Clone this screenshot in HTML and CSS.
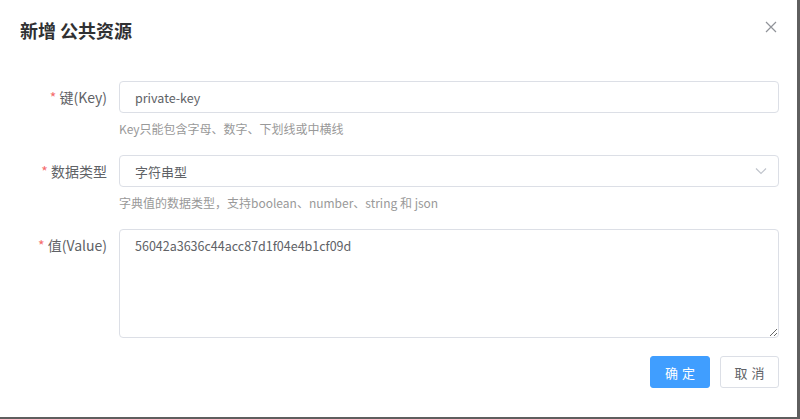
FILE: index.html
```html
<!DOCTYPE html>
<html lang="zh-CN">
<head>
    <meta charset="UTF-8">
    <title>新增 公共资源</title>
    <link rel="stylesheet" href="styles.css">
</head>
<body>
<div class="dialog">
    <div class="dialog-header">
        <span class="dialog-title">新增 公共资源</span>
        <span class="close">
            <svg width="12" height="12" viewBox="0 0 12 12"><path d="M1 1 L11 11 M11 1 L1 11" stroke="#909399" stroke-width="1.2" fill="none"/></svg>
        </span>
    </div>

    <form class="form1">
        <div class="form-item">
            <label class="label"><span class="req">*</span> 键(Key)</label>
            <div class="content">
                <input class="un" type="text" value="private-key">
                <div class="tip">Key只能包含字母、数字、下划线或中横线</div>
            </div>
        </div>

        <div class="form-item">
            <label class="label"><span class="req">*</span> 数据类型</label>
            <div class="content">
                <div class="un select">
                    <span>字符串型</span>
                    <svg class="arrow" width="12" height="8" viewBox="0 0 12 8"><path d="M1 1.5 L6 6.5 L11 1.5" stroke="#c0c4cc" stroke-width="1.2" fill="none"/></svg>
                </div>
                <div class="tip">字典值的数据类型，支持boolean、number、string 和 json</div>
            </div>
        </div>

        <div class="form-item">
            <label class="label"><span class="req">*</span> 值(Value)</label>
            <div class="content">
                <textarea class="un area">56042a3636c44acc87d1f04e4b1cf09d</textarea>
            </div>
        </div>

        <div class="footer">
            <button type="button" class="btn primary">确定</button>
            <button type="button" class="btn">取消</button>
        </div>
    </form>
</div>
</body>
</html>
```

FILE: styles.css
```css
body {
    margin: 0;
    background: #5f5f5f;
    font-family: "Noto Sans CJK SC", "Open Sans", sans-serif;
    width: 800px;
    height: 419px;
    overflow: hidden;
}

.dialog {
    background: #FFFFFF;
    width: 797px;
    height: 417px;
    box-sizing: border-box;
}

.dialog-header {
    display: flex;
    justify-content: space-between;
    align-items: center;
    padding: 18px 20px 0 20px;
    height: 24px;
}

.dialog-title {
    font-size: 18px;
    font-weight: bold;
    color: #303133;
    line-height: 24px;
}

.close {
    display: flex;
    margin-top: -6px;
}

form.form1 {
    display: flex;
    flex-direction: column;
    padding: 39px 18px 0 19px;
}

.form-item {
    display: flex;
    margin-bottom: 16px;
}

.label {
    width: 100px;
    box-sizing: border-box;
    padding-right: 12px;
    text-align: right;
    font-size: 14px;
    color: #606266;
    line-height: 32px;
}

.req {
    color: #f56c6c;
}

.content {
    flex: 1;
    display: flex;
    flex-direction: column;
}

.un {
    width: 100%;
    height: 32px;
    box-sizing: border-box;
    border: 1px solid #dcdfe6;
    border-radius: 4px;
    padding: 0 15px;
    font-family: "Noto Sans CJK SC", "Open Sans", sans-serif;
    font-size: 12.5px;
    color: #606266;
    outline: none;
    background: #fff;
    margin: 0;
}

.select {
    display: flex;
    align-items: center;
    justify-content: space-between;
    padding-right: 11px;
    font-size: 13px;
}

.arrow {
    display: block;
}

.area {
    height: 109px;
    padding: 5px 15px;
    line-height: 21px;
    resize: vertical;
    display: block;
}

.tip {
    margin-top: 6px;
    font-size: 12px;
    line-height: 20px;
    color: #999999;
}

.footer {
    display: flex;
    justify-content: flex-end;
    gap: 10px;
    margin-top: 2px;
}

.btn {
    height: 32px;
    width: 59px;
    box-sizing: border-box;
    border: 1px solid #dcdfe6;
    border-radius: 3px;
    background: #fff;
    color: #606266;
    font-family: "Noto Sans CJK SC", sans-serif;
    font-size: 13px;
    letter-spacing: 4px;
    padding: 0 0 0 4px;
    cursor: pointer;
}

.primary {
    width: 60px;
    background: #409EFF;
    border-color: #409EFF;
    color: #fff;
}
```
